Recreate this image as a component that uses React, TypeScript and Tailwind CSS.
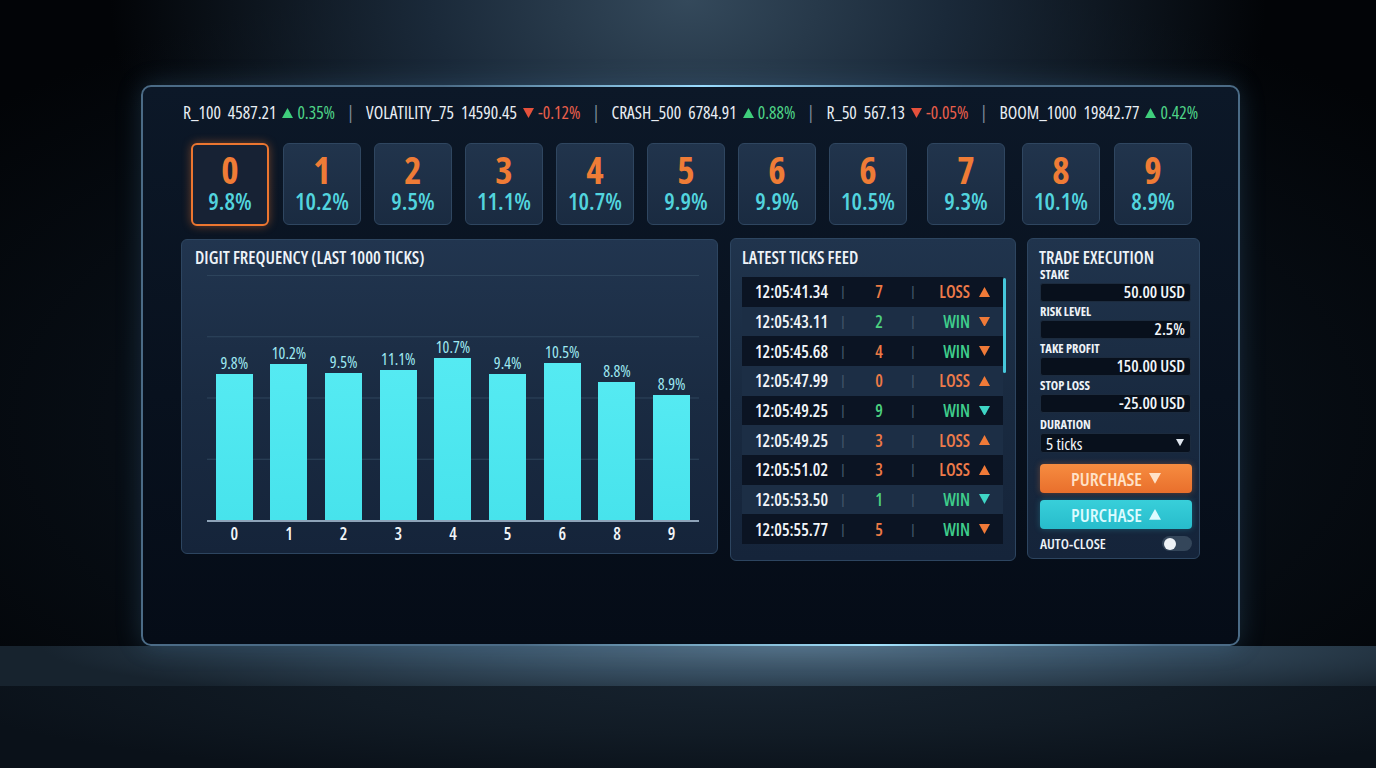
import React from "react";

const tickers = [
  { n: "R_100", p: "4587.21", up: true, c: "0.35%" },
  { n: "VOLATILITY_75", p: "14590.45", up: false, c: "-0.12%" },
  { n: "CRASH_500", p: "6784.91", up: true, c: "0.88%" },
  { n: "R_50", p: "567.13", up: false, c: "-0.05%" },
  { n: "BOOM_1000", p: "19842.77", up: true, c: "0.42%" },
];

const digits: [string, string][] = [
  ["0", "9.8%"],
  ["1", "10.2%"],
  ["2", "9.5%"],
  ["3", "11.1%"],
  ["4", "10.7%"],
  ["5", "9.9%"],
  ["6", "9.9%"],
  ["6", "10.5%"],
  ["7", "9.3%"],
  ["8", "10.1%"],
  ["9", "8.9%"],
];

const digitGaps = [
  "",
  "ml-[14px]",
  "ml-[13px]",
  "ml-[13px]",
  "ml-[13px]",
  "ml-[13px]",
  "ml-[13px]",
  "ml-[13px]",
  "ml-[20px]",
  "ml-[17px]",
  "ml-[14px]",
];

const bars = [
  { d: "0", v: "9.8%", h: 146 },
  { d: "1", v: "10.2%", h: 156 },
  { d: "2", v: "9.5%", h: 147 },
  { d: "3", v: "11.1%", h: 150 },
  { d: "4", v: "10.7%", h: 162 },
  { d: "5", v: "9.4%", h: 146 },
  { d: "6", v: "10.5%", h: 157 },
  { d: "8", v: "8.8%", h: 138 },
  { d: "9", v: "8.9%", h: 125 },
];

type Tick = { t: string; d: string; dc: "o" | "g"; r: "LOSS" | "WIN"; up: boolean; tc: "o" | "t" };
const ticks: Tick[] = [
  { t: "12:05:41.34", d: "7", dc: "o", r: "LOSS", up: true, tc: "o" },
  { t: "12:05:43.11", d: "2", dc: "g", r: "WIN", up: false, tc: "o" },
  { t: "12:05:45.68", d: "4", dc: "o", r: "WIN", up: false, tc: "o" },
  { t: "12:05:47.99", d: "0", dc: "o", r: "LOSS", up: true, tc: "o" },
  { t: "12:05:49.25", d: "9", dc: "g", r: "WIN", up: false, tc: "t" },
  { t: "12:05:49.25", d: "3", dc: "o", r: "LOSS", up: true, tc: "o" },
  { t: "12:05:51.02", d: "3", dc: "o", r: "LOSS", up: true, tc: "o" },
  { t: "12:05:53.50", d: "1", dc: "g", r: "WIN", up: false, tc: "t" },
  { t: "12:05:55.77", d: "5", dc: "o", r: "WIN", up: false, tc: "o" },
];

function Tri({ up, color, size = 11 }: { up: boolean; color: string; size?: number }) {
  return (
    <svg width={size} height={size * 0.9} viewBox="0 0 10 9" className="shrink-0">
      {up ? <polygon points="5,0 10,9 0,9" fill={color} /> : <polygon points="0,0 10,0 5,9" fill={color} />}
    </svg>
  );
}

function Field({ label, value }: { label: string; value: string }) {
  return (
    <div className="mt-[4px]">
      <div className="h-[12px] text-[12.5px] font-bold leading-[12px] text-[#eef3f8]">{label}</div>
      <div className="mt-[2px] flex h-[19px] w-[151px] items-center justify-end rounded-[3px] border border-[#1c2b3e] bg-[#08101c] pr-[5px] text-[16.5px] font-semibold leading-none text-[#f2f6fa]">
        {value}
      </div>
    </div>
  );
}

export default function App() {
  return (
    <div className="relative flex h-[768px] w-[1376px] flex-col overflow-hidden bg-[radial-gradient(ellipse_42%_48%_at_50%_0%,#34495b_0%,#1a2939_45%,rgba(10,18,27,0)_100%),radial-gradient(ellipse_70%_60%_at_50%_55%,#0f1a26_0%,#070d14_60%,#020407_100%)] font-['Open_Sans','Liberation_Sans',sans-serif] [font-stretch:75%]">
      {/* Monitor frame */}
      <div className="relative ml-[141px] mt-[85px] h-[561px] w-[1099px] shrink-0 rounded-[10px] border-2 border-[#4b6b86] bg-[linear-gradient(180deg,#0c1828_0%,#08111e_55%,#050c17_100%)] pl-[38px] pt-[16px] shadow-[0_0_26px_rgba(90,160,210,0.22)]">
        <div className="pointer-events-none absolute -top-[2px] left-[300px] h-[2px] w-[520px] bg-[linear-gradient(90deg,rgba(150,220,255,0)_0%,#9adcff_50%,rgba(150,220,255,0)_100%)]" />
        <div className="pointer-events-none absolute -bottom-[2px] left-[380px] h-[2px] w-[640px] bg-[linear-gradient(90deg,rgba(150,220,255,0)_0%,#a4e4ff_55%,rgba(150,220,255,0)_100%)]" />

        {/* Ticker */}
        <div className="ml-[2px] flex h-[20px] items-center whitespace-nowrap text-[17.5px] font-medium leading-none text-[#e9eef4]">
          {tickers.map((t, i) => (
            <React.Fragment key={t.n}>
              {i > 0 && <span className="mx-[12px] text-[#7e8c9b]">|</span>}
              <span>{t.n}</span>
              <span className="ml-[7px]">{t.p}</span>
              <span className="ml-[6px] mr-[4px]">
                <Tri up={t.up} color={t.up ? "#3fce7c" : "#e5513c"} size={11} />
              </span>
              <span className={t.up ? "text-[#4fd487]" : "text-[#ea5f4b]"}>{t.c}</span>
            </React.Fragment>
          ))}
        </div>

        {/* Digit boxes */}
        <div className="ml-[10px] mt-[20px] flex items-start">
          {digits.map(([d, p], i) => (
            <div
              key={i}
              className={
                i === 0
                  ? "flex h-[83px] w-[78px] flex-col items-center rounded-[6px] border-2 border-[#ec7630] bg-[#172234] pt-[8px] shadow-[0_0_10px_rgba(236,118,48,0.45)]"
                  : "flex h-[82px] w-[78px] flex-col items-center rounded-[6px] border border-[#2f4660] bg-[linear-gradient(180deg,#21344c_0%,#1a2b41_100%)] pt-[9px] " + digitGaps[i]
              }
            >
              <div className="h-[34px] text-[37px] font-bold leading-[34px] text-[#ef7c36]">{d}</div>
              <div className="mt-[2px] h-[24px] text-[23.5px] font-semibold leading-[24px] text-[#52d4de]">{p}</div>
            </div>
          ))}
        </div>

        {/* Panels */}
        <div className="mt-[12px] flex items-start">
          {/* Digit frequency */}
          <div className="mt-[1px] h-[315px] w-[537px] rounded-[6px] border border-[#2d4560] bg-[linear-gradient(180deg,#21354f_0%,#1a2b42_50%,#15243a_100%)] pt-[7px]">
            <div className="ml-[13px] h-[20px] text-[17.5px] font-semibold leading-[20px] text-[#eef3f8]">
              DIGIT FREQUENCY (LAST 1000 TICKS)
            </div>
            <div className="ml-[25px] mt-[8px] w-[492px]">
              <div className="grid h-[247px] grid-cols-9 border-b-2 border-[#8ea3b8] bg-[linear-gradient(to_bottom,#2d445c_1px,transparent_1px)] bg-[length:100%_61.25px]">
                {bars.map((b) => (
                  <div key={b.d} className="flex flex-col items-center justify-end">
                    <div className="mb-[2px] text-[16px] font-medium leading-[18px] text-[#9fe9f2]">{b.v}</div>
                    <div
                      className="w-[37px] bg-[linear-gradient(180deg,#55eaf2_0%,#47e3ec_100%)]"
                      style={{ height: b.h }}
                    />
                  </div>
                ))}
              </div>
              <div className="mt-[1px] grid h-[22px] grid-cols-9">
                {bars.map((b) => (
                  <div key={b.d} className="text-center text-[17px] font-semibold leading-[22px] text-[#f2f5f8]">
                    {b.d}
                  </div>
                ))}
              </div>
            </div>
          </div>

          {/* Latest ticks feed */}
          <div className="ml-[12px] h-[323px] w-[286px] rounded-[6px] border border-[#2d4560] bg-[linear-gradient(180deg,#20344d_0%,#192a40_50%,#15243a_100%)] pl-[11px] pt-[8px]">
            <div className="h-[20px] text-[17.5px] font-semibold leading-[20px] text-[#eef3f8]">LATEST TICKS FEED</div>
            <div className="mt-[10px] flex items-start">
              <div className="w-[261px]">
                {ticks.map((t, i) => (
                  <div
                    key={i}
                    className={
                      "flex h-[29.67px] items-center pl-[13px] text-[17px] font-semibold leading-none " +
                      (i % 2 === 0 ? "bg-[#0b1423]" : "bg-[#1c2e45]")
                    }
                  >
                    <div className="w-[82px] text-[#f1f5f9]">{t.t}</div>
                    <div className="w-[12px] text-center text-[13px] text-[#41546a]">|</div>
                    <div className={"w-[60px] text-center " + (t.dc === "o" ? "text-[#ec7a45]" : "text-[#4ccf7f]")}>{t.d}</div>
                    <div className="w-[8px] text-center text-[13px] text-[#41546a]">|</div>
                    <div className={"w-[53px] text-right " + (t.r === "LOSS" ? "text-[#ee7b4a]" : "text-[#3fce8c]")}>{t.r}</div>
                    <div className="ml-[9px]">
                      <Tri up={t.up} color={t.tc === "o" ? "#f07a38" : "#3fd6c6"} size={11} />
                    </div>
                  </div>
                ))}
              </div>
              <div className="mt-[1px] h-[95px] w-[3px] rounded-full bg-[#46c8dc]" />
            </div>
          </div>

          {/* Trade execution */}
          <div className="ml-[11px] h-[321px] w-[173px] rounded-[6px] border border-[#2d4560] bg-[linear-gradient(180deg,#20344d_0%,#192a40_50%,#15243a_100%)] pl-[11px] pt-[8px]">
            <div className="h-[20px] text-[17.5px] font-semibold leading-[20px] text-[#eef3f8]">TRADE EXECUTION</div>
            <div className="-mt-[2px] pl-[1px]">
              <Field label="STAKE" value="50.00 USD" />
              <Field label="RISK LEVEL" value="2.5%" />
              <Field label="TAKE PROFIT" value="150.00 USD" />
              <Field label="STOP LOSS" value="-25.00 USD" />
              <div className="mt-[6px]">
                <div className="h-[12px] text-[12.5px] font-bold leading-[12px] text-[#eef3f8]">DURATION</div>
                <div className="mt-[2px] flex h-[20px] w-[151px] items-center justify-between rounded-[3px] border border-[#1c2b3e] bg-[#08101c] pl-[5px] pr-[6px] text-[17px] font-medium leading-none text-[#f2f6fa]">
                  <span>5 ticks</span>
                  <Tri up={false} color="#dfe6ee" size={8} />
                </div>
              </div>
              <div className="mt-[11px] flex h-[29px] w-[152px] items-center justify-center gap-[7px] rounded-[4px] bg-[linear-gradient(180deg,#f68c40_0%,#e96f2c_100%)] text-[18.5px] font-semibold text-[#ffe2c8] shadow-[0_0_6px_rgba(240,120,50,0.35)]">
                <span>PURCHASE</span>
                <Tri up={false} color="#ffe2c8" size={12} />
              </div>
              <div className="mt-[7px] flex h-[29px] w-[152px] items-center justify-center gap-[7px] rounded-[4px] bg-[linear-gradient(180deg,#38cfda_0%,#27bccb_100%)] text-[18.5px] font-semibold text-[#dcfbff] shadow-[0_0_6px_rgba(50,200,220,0.3)]">
                <span>PURCHASE</span>
                <Tri up={true} color="#dcfbff" size={12} />
              </div>
              <div className="mt-[6px] flex h-[17px] w-[152px] items-center justify-between">
                <span className="text-[14.5px] font-semibold text-[#eef3f8]">AUTO-CLOSE</span>
                <div className="flex h-[15px] w-[30px] items-center rounded-full bg-[#34465a] pl-[2px]">
                  <div className="h-[12px] w-[12px] rounded-full bg-[#eef2f6]" />
                </div>
              </div>
            </div>
          </div>
        </div>
      </div>

      {/* Reflection band */}
      <div className="h-[40px] shrink-0 bg-[radial-gradient(ellipse_55%_160%_at_58%_0%,#526c80_0%,#364d60_45%,#17232e_100%)]" />
      {/* Floor */}
      <div className="flex-1 bg-[radial-gradient(ellipse_60%_120%_at_55%_0%,#16222e_0%,#111b25_50%,#0a1119_100%)]" />
    </div>
  );
}
